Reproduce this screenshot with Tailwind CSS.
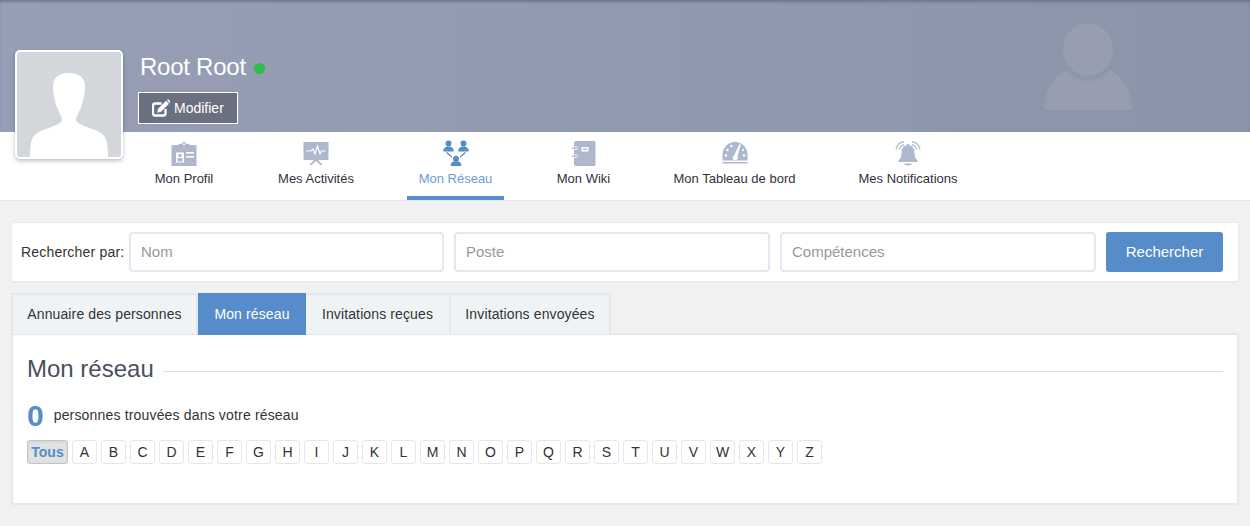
<!DOCTYPE html>
<html lang="fr">
<head>
<meta charset="utf-8">
<title>Mon réseau</title>
<script src="https://cdn.jsdelivr.net/npm/@tailwindcss/browser@4"></script>
</head>
<body class="h-[526px] w-[1250px] overflow-hidden bg-[#f1f1f1] font-['Liberation_Sans',Arial,sans-serif] text-[#333]">
<header class="relative">
  <div class="relative h-[132px] overflow-hidden bg-gradient-to-r from-[#979fb6] to-[#8b94a8] shadow-[inset_0_3px_3px_-1px_rgba(70,75,95,0.45)]">
    <svg class="absolute left-[1043px] top-[23px] h-[87px] w-[90px]" viewBox="0 0 90 87" fill="#979eb1"><ellipse cx="45" cy="26.500" rx="25" ry="26.500"/><path d="M24 47c5 7 13 11 21 11s16-4 21-11c13 6 21 19 23 37 0 2-1 3-2 3H3c-1 0-2-1-2-3 2-18 10-31 23-37z"/></svg>
    <div class="absolute left-[138px] top-[52px]">
      <div class="flex items-center gap-[8px] pl-[2px]">
        <span class="text-[24px] leading-[30px] tracking-[-0.25px] text-white">Root Root</span>
        <span class="mt-[2px] h-[11px] w-[11px] rounded-full bg-[#2dbe4b]"></span>
      </div>
      <button class="mt-[10px] flex h-[32px] w-[100px] items-center gap-[4px] border border-white bg-[#6a7080] pl-[13px] text-[14px] text-white">
        <svg class="h-[18px] w-[18px]" viewBox="0 0 18 18" fill="white"><path d="M9.500 4.500H3a2 2 0 0 0-2 2V14.500a2 2 0 0 0 2 2h8.500a2 2 0 0 0 2-2V10" fill="none" stroke="white" stroke-width="2.300"/><path d="M14 1.800l3 3-8 8-3.800.9.700-3.800zM15 .9l1-.9 2 2v1.200l-.6.900z"/></svg>
        <span class="mt-[1px]">Modifier</span>
      </button>
    </div>
  </div>
  <div class="absolute left-[15px] top-[50px] z-10 h-[109px] w-[108px] overflow-hidden rounded-[5px] border-2 border-white bg-[#d3d7db] shadow-[0_2px_4px_rgba(0,0,0,0.25)]">
    <svg class="h-full w-full" viewBox="0 0 104 105" fill="white"><path d="M13 105C13 92 14 85 20 81C26 77 38 75 44 70C46 67 44 64 42 60C38 52 36 42 36 34C36 26 42 21 52 21C62 21 68 26 68 34C68 42 66 52 62 60C60 64 58 67 60 70C66 75 78 77 84 81C90 85 91 92 91 105Z"/></svg>
  </div>
  <nav class="flex h-[69px] gap-[40px] border-b border-[#e3e6ea] bg-white pl-[143px] text-[13px] leading-[18px]">
    <a class="flex w-[82px] flex-col items-center whitespace-nowrap pt-[9px] text-[#32323e]">
      <svg class="h-[25px] w-[26px]" viewBox="0 0 26 25" fill="#aeb8cc"><path d="M0.500 4h7V3h3a2.600 2.600 0 0 1 5 0h3v1h7v21H.5z"/><g fill="white"><circle cx="13" cy="3.300" r="1"/><rect x="5" y="11.500" width="8" height="10"/><rect x="15" y="11" width="8" height="1.600"/><rect x="15" y="15" width="8" height="1.600"/></g><circle cx="9" cy="14.500" r="1.700"/><rect x="6.500" y="17" width="5" height="3.500"/></svg>
      <span class="mt-[4px]">Mon Profil</span>
    </a>
    <a class="flex w-[102px] flex-col items-center whitespace-nowrap pt-[9px] text-[#32323e]">
      <svg class="h-[25px] w-[26px]" viewBox="0 0 26 25" fill="#aeb8cc"><rect x="0.500" y="1" width="25" height="18" rx="1"/><path d="M11 19l-5 5h2.500l4.500-4 4.500 4H20l-5-5z"/><path d="M3 10h5l2-2 2 5 2.500-8 2.500 8 1.500-3h4" fill="none" stroke="white" stroke-width="1.200"/></svg>
      <span class="mt-[4px]">Mes Activités</span>
    </a>
    <a class="flex w-[97px] flex-col items-center whitespace-nowrap border-b-4 border-[#568cc9] pt-[8px] text-[#6d9bd8]">
      <svg class="h-[26px] w-[26px]" viewBox="0 0 26 26" fill="#568cc9"><circle cx="5.500" cy="3.500" r="3"/><path d="M.2 11.500c0-3.500 2-5 5.300-5s5.300 1.500 5.300 5z"/><circle cx="20.500" cy="3.500" r="3"/><path d="M15.200 11.500c0-3.500 2-5 5.300-5s5.300 1.500 5.300 5z"/><circle cx="13" cy="18.800" r="3"/><path d="M7.700 26c0-3.500 2-4.700 5.300-4.700s5.300 1.200 5.300 4.700z"/><path d="M3.700 12.600l5 4.400M22.300 12.600l-5 4.400" stroke="#568cc9" stroke-width="1.300"/></svg>
      <span class="mt-[4px]">Mon Réseau</span>
    </a>
    <a class="flex w-[79px] flex-col items-center whitespace-nowrap pt-[9px] text-[#32323e]">
      <svg class="h-[25px] w-[24px]" viewBox="0 0 24 25" fill="#aeb8cc"><path d="M2 2a2 2 0 0 1 2-2h18a1.500 1.500 0 0 1 1.500 1.500v22a1.500 1.500 0 0 1-1.500 1.500H4a2 2 0 0 1-2-2z"/><rect x="0" y="6" width="5.500" height="2.500" rx="1.200" stroke="white" stroke-width="0.800"/><rect x="0" y="14" width="5.500" height="2.500" rx="1.200" stroke="white" stroke-width="0.800"/><rect x="9.500" y="6" width="7" height="4.500" fill="white"/><rect x="11" y="7.500" width="4" height="1.500"/></svg>
      <span class="mt-[4px]">Mon Wiki</span>
    </a>
    <a class="flex w-[143px] flex-col items-center whitespace-nowrap pt-[9px] text-[#32323e]">
      <svg class="h-[25px] w-[26px]" viewBox="0 0 26 25" fill="#aeb8cc"><path d="M0.500 19.500v-6a12.500 12.500 0 0 1 25 0v6z"/><rect x="0.500" y="21" width="25" height="1.500"/><g fill="white"><circle cx="4" cy="14.500" r="1.200"/><circle cx="5.500" cy="9" r="1.200"/><circle cx="9.500" cy="5" r="1.200"/><circle cx="22" cy="14.500" r="1.200"/><circle cx="21" cy="9" r="1.100"/><path d="M17.500 3l1.300.5-3.500 12a2.500 2.500 0 1 1-3.300-1z"/></g></svg>
      <span class="mt-[4px]">Mon Tableau de bord</span>
    </a>
    <a class="flex w-[124px] flex-col items-center whitespace-nowrap pt-[9px] text-[#32323e]">
      <svg class="h-[25px] w-[26px]" viewBox="0 0 26 25" fill="#aeb8cc"><path d="M13 3a1.800 1.800 0 0 1 1.800 1.500c3.700 1 4.700 4 4.700 7.500 0 3.500 1 6 3 7.500v1.500H3.500V19.500c2-1.500 3-4 3-7.500 0-3.500 1-6.500 4.700-7.500A1.800 1.800 0 0 1 13 3z"/><path d="M9 22.500h8c0 1.300-1.500 2-4 2s-4-.7-4-2z"/><path d="M1 8.500C1.800 4.500 5 1.200 9 .7M4.300 8.500C4.900 6 6.800 4.200 9 3.800M25 8.500C24.200 4.500 21 1.200 17 .7M21.700 8.500C21.100 6 19.200 4.200 17 3.800" fill="none" stroke="#aeb8cc" stroke-width="1.200"/></svg>
      <span class="mt-[4px]">Mes Notifications</span>
    </a>
  </nav>
</header>
<main class="px-[11px] pt-[21px]">
  <form class="flex h-[60px] items-center rounded-[2px] border border-[#e9ebee] bg-white pl-[9px] pr-[15px] shadow-[0_1px_1px_rgba(0,0,0,0.03)]">
    <label class="mr-[5px] w-[103px] whitespace-nowrap text-[14px] tracking-[0.2px] text-[#333]">Rechercher par:</label>
    <input class="h-[40px] w-[315px] rounded-[4px] border-2 border-[#e2e8ef] px-[10px] pb-[1px] text-[15px] placeholder:text-[#999]" placeholder="Nom">
    <input class="ml-[10px] h-[40px] w-[316px] rounded-[4px] border-2 border-[#e2e8ef] px-[10px] pb-[1px] text-[15px] placeholder:text-[#999]" placeholder="Poste">
    <input class="ml-[10px] h-[40px] w-[316px] rounded-[4px] border-2 border-[#e2e8ef] px-[10px] pb-[1px] text-[15px] placeholder:text-[#999]" placeholder="Compétences">
    <button type="button" class="ml-[10px] h-[40px] w-[117px] rounded-[3px] bg-[#568cc9] text-[15px] text-white">Rechercher</button>
  </form>
  <div class="mt-[11px] flex text-[14px] tracking-[0.12px]">
    <a class="flex h-[41px] w-[187px] items-center justify-center border-2 border-b-0 border-[#e3e8ee] bg-[#f0f3f6] text-[#333]">Annuaire des personnes</a>
    <a class="relative z-10 flex h-[42px] w-[108px] items-center justify-center bg-[#568cc9] text-white">Mon réseau</a>
    <a class="flex h-[41px] w-[145px] items-center justify-center border-2 border-b-0 border-l-0 border-[#e3e8ee] bg-[#f0f3f6] text-[#333]">Invitations reçues</a>
    <a class="flex h-[41px] w-[160px] items-center justify-center border-2 border-b-0 border-l-0 border-[#e3e8ee] bg-[#f0f3f6] text-[#333]">Invitations envoyées</a>
  </div>
  <section class="-mt-[2px] h-[172px] rounded-b-[2px] border-2 border-[#e3e8ee] bg-white px-[14px] pt-[19px]">
    <div class="flex items-center gap-[9px]">
      <h2 class="text-[24px] leading-[30px] text-[#4a4f5e]">Mon réseau</h2>
      <div class="mt-[5px] h-px flex-1 bg-[#dcdfe3]"></div>
    </div>
    <p class="mt-[15px] flex h-[32px] items-center text-[14px] tracking-[0.17px] text-[#333]"><strong class="mr-[10px] text-[30px] font-bold tracking-normal text-[#568cc9]">0</strong>personnes trouvées dans votre réseau</p>
    <div class="mt-[9px] flex gap-[4px] text-[14px]">
      <span class="flex h-[24px] w-[41px] items-center justify-center rounded-[3px] border border-[#c4c4c4] bg-[#e2e2e2] font-bold text-[#568cc9] shadow-[inset_0_1px_3px_rgba(0,0,0,0.08)]">Tous</span>
      <span class="flex h-[24px] w-[25px] items-center justify-center rounded-[3px] border border-[#e3e8ee]">A</span>
      <span class="flex h-[24px] w-[25px] items-center justify-center rounded-[3px] border border-[#e3e8ee]">B</span>
      <span class="flex h-[24px] w-[25px] items-center justify-center rounded-[3px] border border-[#e3e8ee]">C</span>
      <span class="flex h-[24px] w-[25px] items-center justify-center rounded-[3px] border border-[#e3e8ee]">D</span>
      <span class="flex h-[24px] w-[25px] items-center justify-center rounded-[3px] border border-[#e3e8ee]">E</span>
      <span class="flex h-[24px] w-[25px] items-center justify-center rounded-[3px] border border-[#e3e8ee]">F</span>
      <span class="flex h-[24px] w-[25px] items-center justify-center rounded-[3px] border border-[#e3e8ee]">G</span>
      <span class="flex h-[24px] w-[25px] items-center justify-center rounded-[3px] border border-[#e3e8ee]">H</span>
      <span class="flex h-[24px] w-[25px] items-center justify-center rounded-[3px] border border-[#e3e8ee]">I</span>
      <span class="flex h-[24px] w-[25px] items-center justify-center rounded-[3px] border border-[#e3e8ee]">J</span>
      <span class="flex h-[24px] w-[25px] items-center justify-center rounded-[3px] border border-[#e3e8ee]">K</span>
      <span class="flex h-[24px] w-[25px] items-center justify-center rounded-[3px] border border-[#e3e8ee]">L</span>
      <span class="flex h-[24px] w-[25px] items-center justify-center rounded-[3px] border border-[#e3e8ee]">M</span>
      <span class="flex h-[24px] w-[25px] items-center justify-center rounded-[3px] border border-[#e3e8ee]">N</span>
      <span class="flex h-[24px] w-[25px] items-center justify-center rounded-[3px] border border-[#e3e8ee]">O</span>
      <span class="flex h-[24px] w-[25px] items-center justify-center rounded-[3px] border border-[#e3e8ee]">P</span>
      <span class="flex h-[24px] w-[25px] items-center justify-center rounded-[3px] border border-[#e3e8ee]">Q</span>
      <span class="flex h-[24px] w-[25px] items-center justify-center rounded-[3px] border border-[#e3e8ee]">R</span>
      <span class="flex h-[24px] w-[25px] items-center justify-center rounded-[3px] border border-[#e3e8ee]">S</span>
      <span class="flex h-[24px] w-[25px] items-center justify-center rounded-[3px] border border-[#e3e8ee]">T</span>
      <span class="flex h-[24px] w-[25px] items-center justify-center rounded-[3px] border border-[#e3e8ee]">U</span>
      <span class="flex h-[24px] w-[25px] items-center justify-center rounded-[3px] border border-[#e3e8ee]">V</span>
      <span class="flex h-[24px] w-[25px] items-center justify-center rounded-[3px] border border-[#e3e8ee]">W</span>
      <span class="flex h-[24px] w-[25px] items-center justify-center rounded-[3px] border border-[#e3e8ee]">X</span>
      <span class="flex h-[24px] w-[25px] items-center justify-center rounded-[3px] border border-[#e3e8ee]">Y</span>
      <span class="flex h-[24px] w-[25px] items-center justify-center rounded-[3px] border border-[#e3e8ee]">Z</span>
    </div>
  </section>
</main>
</body>
</html>
